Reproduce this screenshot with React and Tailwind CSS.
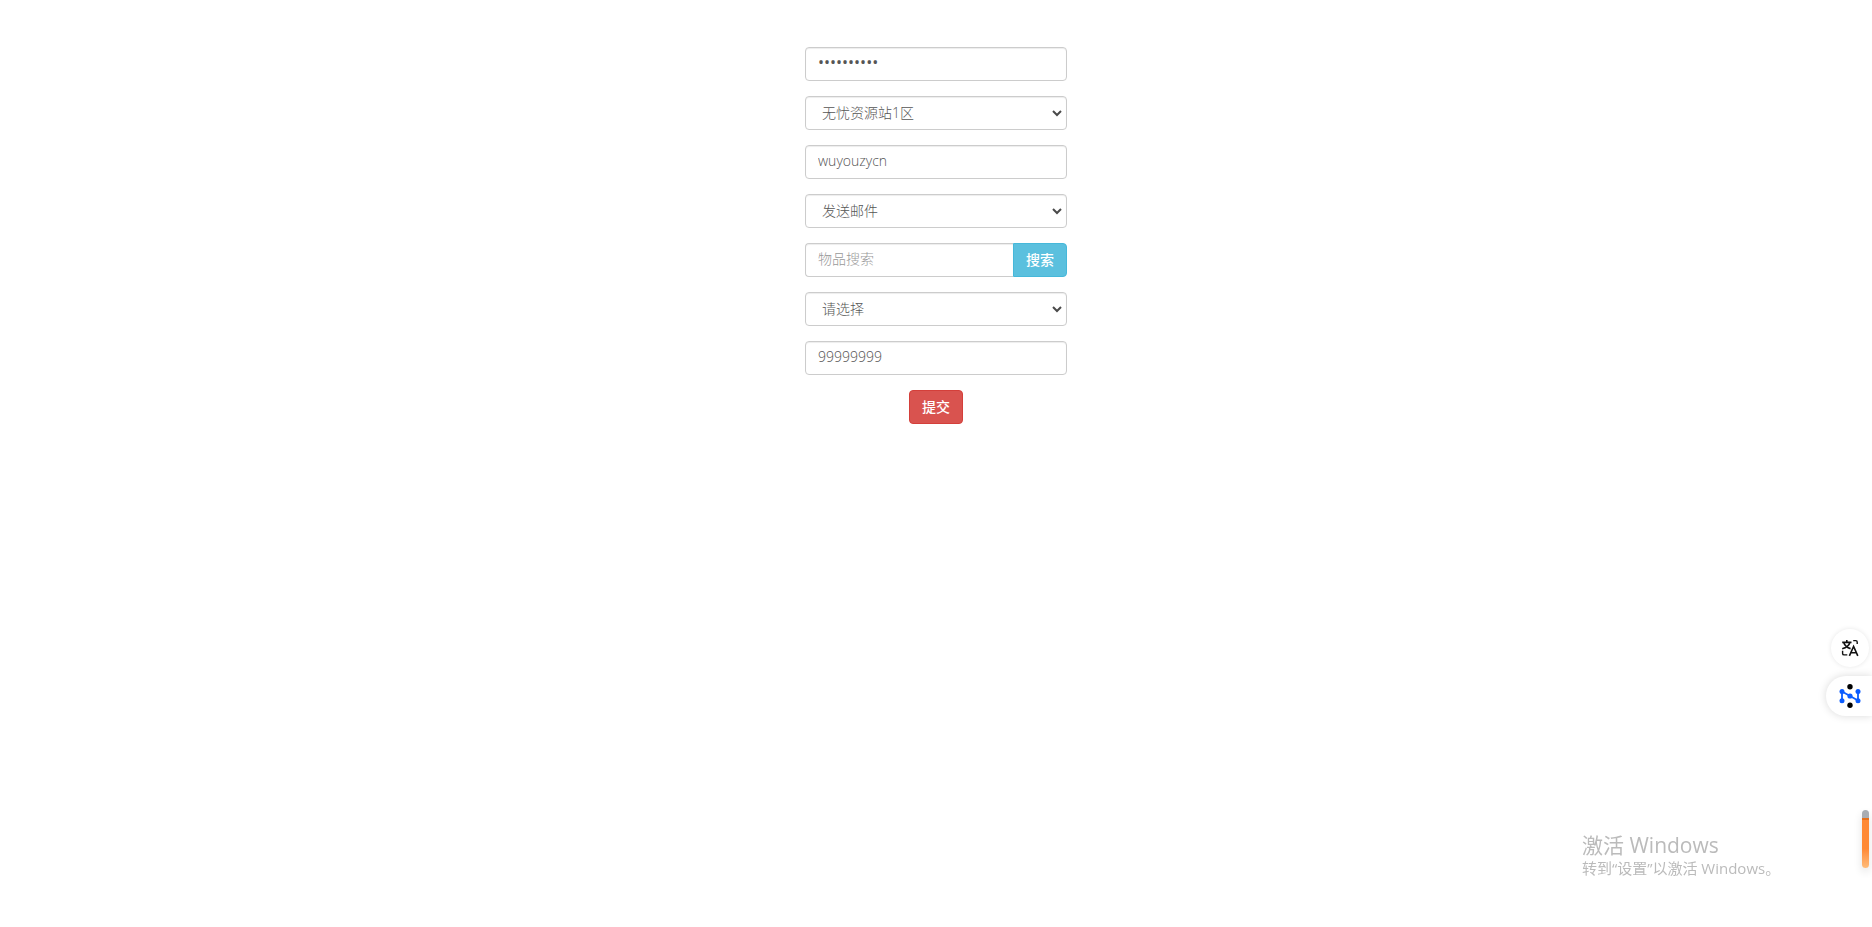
import React from "react";

const field =
  "block w-full h-[34px] rounded border border-[#ccc] bg-white text-[#555] shadow-[inset_0_1px_1px_rgba(0,0,0,0.075)] outline-none focus:border-[#66afe9]";
const input = field + " px-3 pt-1 pb-2 placeholder:text-[#999]";

function Select({ label, options }) {
  return (
    <div className="relative">
      <select aria-label={label} className={field + " appearance-none pl-4 pr-6 text-sm"}>
        {options.map((o) => (
          <option key={o}>{o}</option>
        ))}
      </select>
      <svg
        className="pointer-events-none absolute right-1 top-3 h-[10px] w-[12px]"
        viewBox="0 0 12 10"
        fill="none"
        stroke="#4a4a4a"
        strokeWidth="2"
      >
        <path d="M2 3l4 4 4-4" />
      </svg>
    </div>
  );
}

function TranslateIcon() {
  return (
    <svg className="h-[18px] w-[18px]" viewBox="0 0 18 18" fill="none" stroke="#111" strokeWidth="1.6">
      <path d="M1.200 3.400h9.300M5.800 1v2.400M2.800 3.800C3.800 6.800 6 8.700 9.600 9.600M8.800 3.800C8 6.800 5.400 8.800 1.200 9.800" />
      <path d="M8.400 16.800L12.600 7.400l4.200 9.400M9.900 13.800h5.400" />
      <path d="M12.200 1.600h2.500q1.500 0 1.500 1.500v2M1.600 11.800v2.600q0 1.500 1.500 1.500h3.200" strokeWidth="1.400" />
    </svg>
  );
}

function NetworkIcon() {
  return (
    <svg className="h-[24px] w-[22px]" viewBox="0 0 22 24">
      <path d="M3 17V7.500L19 16.500V7" fill="none" stroke="#0b5cff" strokeWidth="1.8" />
      <g fill="#0b5cff">
        <circle cx="3" cy="7.500" r="2.500" />
        <circle cx="3" cy="16.800" r="2.500" />
        <circle cx="11" cy="12" r="2.600" />
        <circle cx="19" cy="7.500" r="2.500" />
        <circle cx="19" cy="16.800" r="2.500" />
      </g>
      <circle cx="11" cy="2.800" r="2.700" fill="#000" />
      <circle cx="11" cy="21.200" r="2.700" fill="#000" />
    </svg>
  );
}

export default function App() {
  return (
    <div className="min-h-screen bg-white font-['Open_Sans','Noto_Sans_CJK_SC',sans-serif] font-light">
      <form
        className="mx-auto flex w-[262px] max-w-full flex-col gap-[15px] pt-[47px]"
        onSubmit={(e) => e.preventDefault()}
      >
        <input
          type="password"
          aria-label="密码"
          defaultValue="0000000000"
          className={input + " text-base font-normal"}
        />
        <Select label="分区" options={["无忧资源站1区"]} />
        <input type="text" aria-label="账号" defaultValue="wuyouzycn" className={input + " text-sm"} />
        <Select label="操作" options={["发送邮件"]} />
        <div className="flex">
          <input
            type="text"
            aria-label="物品搜索"
            placeholder="物品搜索"
            className={input + " min-w-0 flex-1 rounded-r-none border-r-0 text-sm"}
          />
          <button
            type="button"
            className="h-[34px] shrink-0 rounded-r border border-[#46b8da] bg-[#5bc0de] px-3 text-sm font-medium text-white"
          >
            搜索
          </button>
        </div>
        <Select label="物品" options={["请选择"]} />
        <input type="text" aria-label="数量" defaultValue="99999999" className={input + " text-sm"} />
        <button
          type="submit"
          className="h-[34px] self-center rounded border border-[#d43f3a] bg-[#d9534f] px-3 text-sm font-medium text-white"
        >
          提交
        </button>
      </form>

      <div className="fixed bottom-[211px] right-0 flex flex-col items-end gap-[9px]">
        <button
          type="button"
          aria-label="翻译"
          className="mr-[3px] flex size-[38px] items-center justify-center rounded-full bg-white shadow-[0_0_5px_rgba(0,0,0,0.1)]"
        >
          <TranslateIcon />
        </button>
        <button
          type="button"
          aria-label="助手"
          className="flex h-10 w-[46px] items-center rounded-l-full bg-white pl-[13px] shadow-[0_0_8px_rgba(0,0,0,0.15)]"
        >
          <NetworkIcon />
        </button>
      </div>

      <div className="fixed bottom-12 right-[92px] w-[198px] whitespace-nowrap font-normal text-[#bbb]">
        <p className="text-[21px] leading-[26px]">激活 Windows</p>
        <p className="text-[15px] leading-[21px]">转到“设置”以激活 Windows。</p>
      </div>

      <div className="fixed bottom-[59px] right-[3px] flex h-[58px] w-[7px] flex-col overflow-hidden rounded-full shadow-[0_4px_8px_rgba(0,0,0,0.12)]">
        <div className="h-2 bg-[#a9adb2]" />
        <div className="flex-1 border-t-2 border-[#e8701a] bg-linear-to-b from-[#ff8a35] from-60% to-[#ffbb78]" />
      </div>
    </div>
  );
}
